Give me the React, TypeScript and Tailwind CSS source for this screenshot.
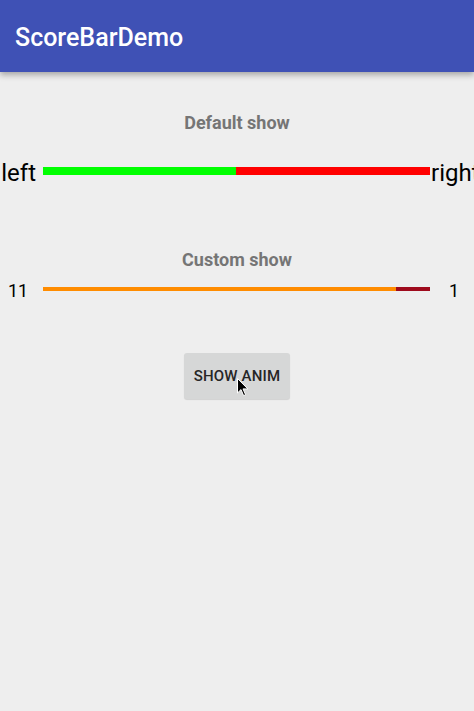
import React from "react";

export default function App() {
  return (
    <div
      className="w-[474px] h-[711px] bg-[#eeeeee] overflow-hidden flex flex-col"
      style={{ fontFamily: "Roboto, 'Noto Sans', sans-serif" }}
    >
      <header className="relative z-10 h-[72px] shrink-0 bg-[#3f51b5] px-[15px] pt-[23px] shadow-[0_3px_6px_rgba(0,0,0,0.3)]">
        <div className="text-white text-[25px] leading-[29px] font-medium">ScoreBarDemo</div>
      </header>

      <main className="flex flex-col">
        <div className="mt-[40px] h-[22px] text-center text-[18px] leading-[22px] font-bold text-[#757575]">
          Default show
        </div>

        <div className="mt-[25px] flex items-start h-[28px]">
          <div className="w-[43px] shrink-0 pr-[7px] text-right text-[24px] leading-[28px] text-black">left</div>
          <div className="mt-[8px] flex w-[387px] shrink-0 h-[8px]">
            <div className="w-[193px] bg-[#00ff00]" />
            <div className="flex-1 bg-[#ff0000]" />
          </div>
          <div className="pl-[1px] whitespace-nowrap text-[24px] leading-[28px] text-black">right</div>
        </div>

        <div className="mt-[62px] h-[22px] text-center text-[18px] leading-[22px] font-bold text-[#757575]">
          Custom show
        </div>

        <div className="mt-[9px] flex items-start h-[22px]">
          <div className="w-[43px] shrink-0 pl-[8px] text-[18px] leading-[22px] text-black">11</div>
          <div className="mt-[7px] flex w-[387px] shrink-0 h-[4px]">
            <div className="w-[353px] bg-[#ff8c00]" />
            <div className="flex-1 bg-[#9e0a1c]" />
          </div>
          <div className="pl-[19px] text-[18px] leading-[22px] text-black">1</div>
        </div>

        <div className="mt-[51px] flex justify-center">
          <div className="relative w-[106px] h-[46px] rounded-[3px] bg-[#d6d7d7] shadow-[0_1px_1px_rgba(0,0,0,0.12)] flex items-center justify-center">
            <span className="text-[15px] leading-[18px] font-medium text-[#262626] tracking-[0.2px]">SHOW ANIM</span>
            <svg
              className="absolute left-[53px] top-[25px]"
              width="12"
              height="19"
              viewBox="0 0 12 19"
            >
              <path
                d="M0.5 0.5 L0.5 15 L4 11.6 L6.6 17.6 L8.6 16.7 L6 10.9 L10.8 10.9 Z"
                fill="#000"
                stroke="#fff"
                strokeWidth="1"
                strokeLinejoin="round"
              />
            </svg>
          </div>
        </div>
      </main>
    </div>
  );
}
